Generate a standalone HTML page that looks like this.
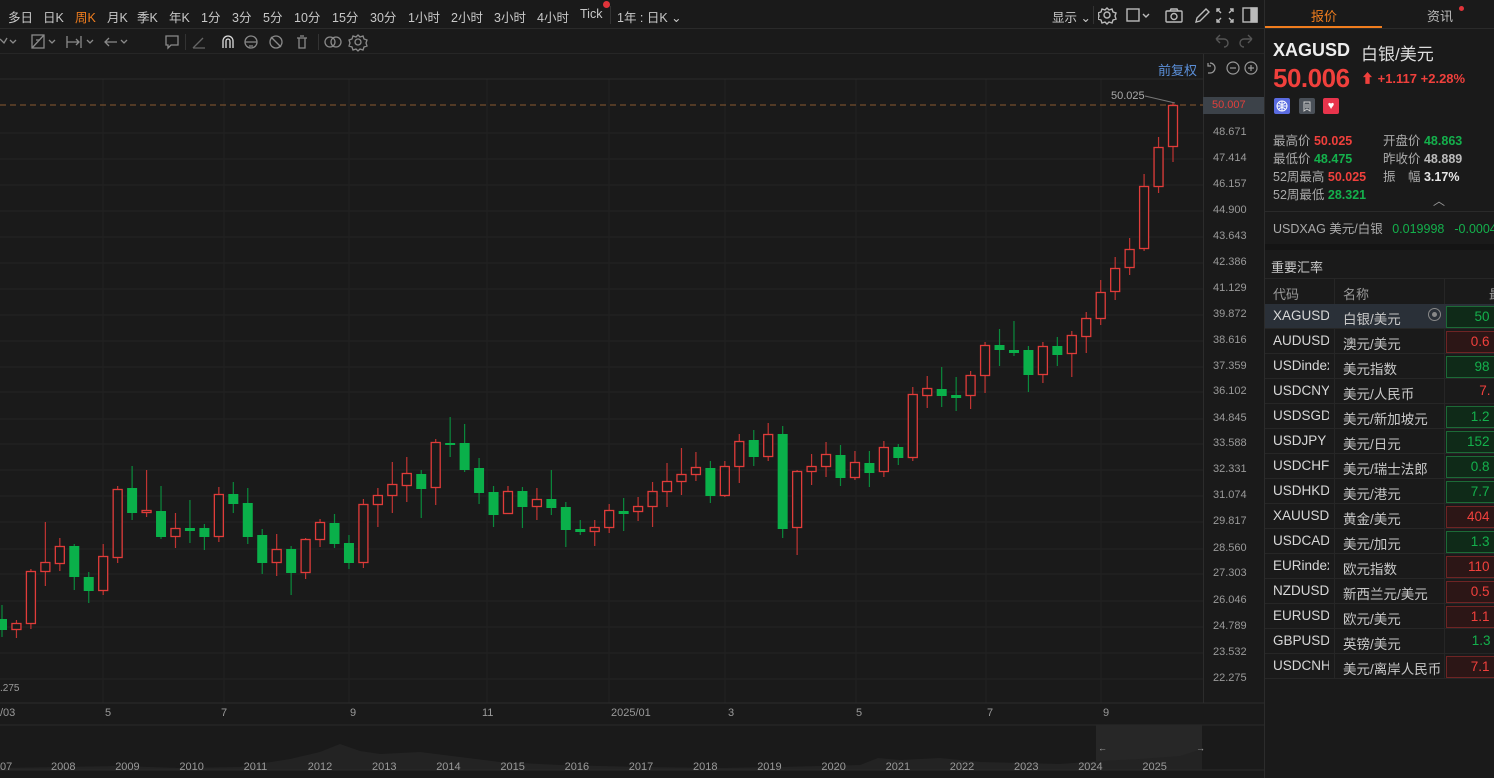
<!DOCTYPE html>
<html><head><meta charset="utf-8">
<style>
*{margin:0;padding:0;box-sizing:border-box}
body{width:1494px;height:778px;background:#1a1a1a;overflow:hidden;position:relative;font-family:"Liberation Sans","Noto Sans CJK SC",sans-serif;color:#c8c8c8;font-size:13px}
.a{position:absolute;white-space:nowrap}
.tb span{position:absolute;top:7px;font-size:12.5px;color:#c8c8c8}
.pl{position:absolute;left:1213px;font-size:11px;color:#9a9a9a}
.rp{position:absolute;left:1264px;top:0;width:230px;height:778px;background:#1a1a1a;border-left:1px solid #2c2c2c}
.st{position:absolute;font-size:12.5px;color:#aaa;white-space:nowrap}
.r{color:#f0403c}.g{color:#14b04c}.w{color:#e6e6e6}.y{color:#e3b23c}
.row{position:absolute;left:0;width:230px;height:25px;border-bottom:1px solid #262626;font-size:13.5px;white-space:nowrap}
.row .c1{position:absolute;left:8px;top:4px;width:56px;overflow:hidden;color:#d8d8d8}
.row .c2{position:absolute;left:78px;top:4px;width:97px;overflow:hidden;color:#c8c8c8}
.row .c3{position:absolute;left:181px;top:2px;width:52px;height:22px;font-size:13.5px;padding-top:2px;text-align:right}
.gb{background:#0f2a18;border:1px solid #1c6a36;color:#14b04c}
.rb{background:#2c1616;border:1px solid #6e2424;color:#f0403c}
.nb{color:#f0403c}
</style></head><body>
<div class="tb" style="position:absolute;left:0;top:0;width:1264px;height:29px;border-bottom:1px solid #2a2a2a">
<span style="left:8px">多日</span><span style="left:43px">日K</span><span style="left:75px;color:#f07d1e">周K</span><span style="left:107px">月K</span><span style="left:137px">季K</span><span style="left:169px">年K</span><span style="left:201px">1分</span><span style="left:232px">3分</span><span style="left:263px">5分</span><span style="left:294px">10分</span><span style="left:332px">15分</span><span style="left:370px">30分</span><span style="left:408px">1小时</span><span style="left:451px">2小时</span><span style="left:494px">3小时</span><span style="left:537px">4小时</span><span style="left:580px">Tick</span><span style="left:617px">1年 : 日K ⌄</span><span style="left:1052px">显示 ⌄</span>
</div>
<div class="a" style="left:603px;top:1px;width:7px;height:7px;border-radius:50%;background:#e0343a"></div>
<div class="a" style="left:610px;top:6px;width:1px;height:18px;background:#333"></div>
<div class="a" style="left:1093px;top:6px;width:1px;height:18px;background:#333"></div>
<svg class="a" style="left:1098px;top:5px" width="166" height="20" fill="none" stroke="#bbb" stroke-width="1.4">
<circle cx="9" cy="10" r="3"/><path d="M9 3l2 2 3-1 1 3 3 1-1 3 1 3-3 1-1 3-3-1-2 2-2-2-3 1-1-3-3-1 1-3-1-3 3-1 1-3 3 1z"/>
<rect x="29" y="4" width="12" height="12"/><path d="M45 9l3 3 3-3"/>
<rect x="68" y="6" width="16" height="11" rx="1"/><circle cx="76" cy="11.5" r="3"/><path d="M72 6l1-2h6l1 2"/>
<path d="M98 17l1-4 9-9 3 3-9 9z"/>
<path d="M122 4h-3v3M132 4h3v3M122 17h-3v-3M132 17h3v-3M119 4l4 4M135 4l-4 4M119 17l4-4M135 17l-4-4"/>
<rect x="145" y="3" width="14" height="14"/><rect x="153" y="3" width="6" height="14" fill="#bbb"/>
</svg>
<div class="a" style="left:0;top:29px;width:1264px;height:25px;border-bottom:1px solid #262626"></div>
<svg class="a" style="left:0;top:32px" width="380" height="20" fill="none" stroke="#8a8a8a" stroke-width="1.3">
<path d="M0 7l4 4 3-5M10 8l3 3 3-3"/>
<rect x="32" y="3" width="12" height="13"/><path d="M32 16l12-13M36 8h4"/><path d="M49 8l3 3 3-3"/>
<path d="M67 4v12M67 10h12M76 7l3 3-3 3M81 4v12"/><path d="M87 8l3 3 3-3"/>
<path d="M105 10h12M109 6l-4 4 4 4"/><path d="M121 8l3 3 3-3"/>
<path d="M166 4h12v9h-7l-3 3v-3h-2z"/>
<path d="M193 16l10-10M193 16h12" stroke="#666"/>
<path d="M223 16v-7a5 5 0 0110 0v7M226 16v-7a2 2 0 014 0v7" stroke="#ddd"/>
<circle cx="251" cy="10" r="6"/><path d="M245 10h12M249 14h4"/>
<circle cx="276" cy="10" r="6"/><path d="M271 5l10 10"/>
<path d="M297 6h10M299 6v10h6V6M300 4h4"/>
<circle cx="330" cy="10" r="5"/><circle cx="336" cy="10" r="5"/>
<circle cx="358" cy="10" r="3"/><path d="M358 3l2 2 3-1 1 3 3 1-1 3 1 3-3 1-1 3-3-1-2 2-2-2-3 1-1-3-3-1 1-3-1-3 3-1 1-3 3 1z"/>
</svg>
<div class="a" style="left:185px;top:34px;width:1px;height:16px;background:#333"></div>
<div class="a" style="left:318px;top:34px;width:1px;height:16px;background:#333"></div>
<svg class="a" style="left:1212px;top:33px" width="45" height="16" fill="none" stroke="#555" stroke-width="1.4"><path d="M4 6h8a4 4 0 010 8M4 6l4-4M4 6l4 4M40 6h-8a4 4 0 000 8M40 6l-4-4M40 6l-4 4"/></svg>
<svg id="ch" class="a" style="left:0;top:54px" width="1264" height="724"></svg>
<div class="a" style="left:1158px;top:60px;font-size:13px;color:#5b8fd8">前复权</div>
<svg class="a" style="left:1205px;top:60px" width="55" height="16" fill="none" stroke="#999" stroke-width="1.2"><path d="M5 3a5 5 0 110 10H3M3 3v3h3"/><circle cx="28" cy="8" r="6"/><path d="M25 8h6"/><circle cx="46" cy="8" r="6"/><path d="M43 8h6M46 5v6"/></svg>
<div class="a" style="left:1111px;top:90px;font-size:11px;color:#aaa">50.025</div>
<div class="a" style="left:1203px;top:97px;width:61px;height:17px;background:#3c4249;color:#e0403c;font-size:11px;padding:2px 0 0 9px">50.007</div>
<div id="pls"></div>
<div class="a" style="left:0;top:683px;font-size:10px;color:#9a9a9a">.275</div>
<div id="tls"></div>
<div class="rp">
<div class="a" style="left:0;top:0;width:117px;height:28px;border-bottom:2px solid #f07d1e"></div>
<div class="a" style="left:0;top:28px;width:230px;height:1px;background:#2a2a2a"></div>
<div class="a" style="left:46px;top:6px;color:#f07d1e;font-size:13px">报价</div>
<div class="a" style="left:162px;top:6px;color:#bbb;font-size:13px">资讯</div>
<div class="a" style="left:194px;top:6px;width:5px;height:5px;border-radius:50%;background:#e0343a"></div>
<div class="a" style="left:8px;top:40px;font-size:18px;font-weight:bold;color:#eee">XAGUSD</div>
<div class="a" style="left:96px;top:40px;font-size:17px;color:#ddd">白银/美元</div>
<div class="a" style="left:8px;top:63px;font-size:26px;font-weight:bold;color:#f0403c;letter-spacing:-0.5px">50.006</div>
<div class="a" style="left:96px;top:68px;font-size:13px;font-weight:bold;color:#f0403c">⬆ +1.117 +2.28%</div>
<div class="a" style="left:9px;top:98px;width:16px;height:16px;background:#5a6be0;border-radius:2px"></div>
<svg class="a" style="left:9px;top:98px" width="16" height="16" fill="none" stroke="#fff" stroke-width="1"><circle cx="8" cy="8" r="5"/><path d="M3 8h10M8 3v10M5 5q3 3 6 0M5 11q3-3 6 0"/></svg>
<div class="a" style="left:34px;top:98px;width:16px;height:16px;background:#4a5058;border-radius:2px"></div>
<svg class="a" style="left:34px;top:98px" width="16" height="16" fill="none" stroke="#ccc" stroke-width="1"><path d="M5 4h6v9l-3-2-3 2z M6 7h4M6 9h4"/></svg>
<div class="a" style="left:58px;top:98px;width:16px;height:16px;background:#e8344c;border-radius:2px;color:#fff;font-size:11px;text-align:center;line-height:16px">♥</div>
<div class="st" style="left:8px;top:130px">最高价 <b class="r">50.025</b></div>
<div class="st" style="left:8px;top:148px">最低价 <b class="g">48.475</b></div>
<div class="st" style="left:8px;top:166px">52周最高 <b class="r">50.025</b></div>
<div class="st" style="left:8px;top:184px">52周最低 <b class="g">28.321</b></div>
<div class="st" style="left:118px;top:130px">开盘价 <b class="g">48.863</b></div>
<div class="st" style="left:118px;top:148px">昨收价 <b style="color:#bbb">48.889</b></div>
<div class="st" style="left:118px;top:166px">振　幅 <b class="w">3.17%</b></div>
<div class="a" style="left:168px;top:192px;color:#999;font-size:12px">︿</div>
<div class="a" style="left:0;top:211px;width:230px;height:1px;background:#2a2a2a"></div>
<div class="a" style="left:8px;top:218px;font-size:12.5px;color:#aaa">USDXAG 美元/白银 <span class="g" style="margin-left:6px">0.019998</span><span class="g" style="margin-left:10px">-0.00045</span></div>
<div class="a" style="left:0;top:244px;width:230px;height:6px;background:#141414"></div>
<div class="a" style="left:6px;top:257px;font-size:13px;color:#ccc">重要汇率</div>
<div class="a" style="left:0;top:278px;width:230px;height:1px;background:#262626"></div>
<div class="a" style="left:69px;top:279px;width:1px;height:400px;background:#262626"></div>
<div class="a" style="left:179px;top:279px;width:1px;height:400px;background:#262626"></div>
<div class="a" style="left:8px;top:284px;color:#999;font-size:13px">代码</div>
<div class="a" style="left:78px;top:284px;color:#999;font-size:13px">名称</div>
<div class="a" style="left:224px;top:284px;color:#999;font-size:13px">最</div>
<div id="rows"></div>
</div>
<script>
var ch=document.getElementById('ch'),s='';
var T=54;
var py=[133,159,185,211,237,263,289,315,341,367,392,419,444,470,496,522,549,574,601,627,653,679];
py.forEach(function(y){s+='<line x1="0" x2="1203" y1="'+(y-T)+'" y2="'+(y-T)+'" stroke="#242424"/>';});
[103,224,349,487,609,725,856,986,1101].forEach(function(x){s+='<line x1="'+x+'" x2="'+x+'" y1="25" y2="649" stroke="#222"/>';});
s+='<line x1="0" x2="1203" y1="25" y2="25" stroke="#2a2a2a"/>';
s+='<line x1="1203.5" x2="1203.5" y1="0" y2="649" stroke="#2c2c2c"/>';
s+='<line x1="0" x2="1264" y1="649" y2="649" stroke="#2c2c2c"/>';
s+='<line x1="0" x2="1264" y1="671" y2="671" stroke="#2a2a2a"/>';
s+='<line x1="0" x2="1203" y1="51" y2="51" stroke="#8a5a30" stroke-dasharray="6,4"/>';
s+='<line x1="1145" x2="1175" y1="42" y2="49" stroke="#777"/>';
var nav='M0 716 ';var pts=[[0,714],[60,713],[120,712],[180,714],[240,713],[290,705],[320,698],[340,690],[360,697],[380,700],[420,698],[460,703],[500,708],[560,711],[640,713],[720,714],[780,713],[820,712],[860,711],[878,704],[900,706],[940,704],[980,708],[1020,709],[1060,710],[1100,707],[1140,705],[1180,702],[1202,695],[1202,716]];
pts.forEach(function(p){nav+='L'+p[0]+' '+p[1]+' ';});
s+='<rect x="1096" y="671" width="106" height="45" fill="#272727"/>';
s+='<path d="'+nav+'Z" fill="#232323"/>';
s+='<text x="1098" y="697" fill="#aaa" font-size="9">←</text><text x="1196" y="697" fill="#aaa" font-size="9">→</text>';
s+='<line x1="0" x2="1264" y1="716" y2="716" stroke="#2a2a2a"/>';
var D=[
['g',619,630,605,637],['r',623,630,620,638],['r',571,624,569,629],['r',562,572,522,586],['r',546,564,538,571],['g',546,577,544,590],['g',577,591,572,603],['r',556,591,544,595],['r',489,558,486,563],['g',488,513,466,520],['r',510,513,470,517],['g',511,537,486,539],['r',528,537,513,548],['g',528,531,500,543],['g',528,537,524,550],['r',494,537,487,542],['g',494,504,482,513],['g',503,537,488,544],['g',535,563,529,574],['r',549,563,534,576],['g',549,573,546,595],['r',539,573,538,579],['r',522,540,519,547],['g',523,544,514,548],['g',543,563,535,569],['r',504,563,499,568],['r',495,505,488,527],['r',484,496,462,513],['r',473,486,457,502],['g',474,489,470,518],['r',442,488,439,505],['g',443,445,417,457],['g',443,470,424,472],['g',468,493,458,504],['g',492,515,486,527],['r',491,514,486,514],['g',491,507,487,528],['r',499,507,488,520],['g',499,508,470,515],['g',507,530,502,547],['g',529,532,520,535],['r',527,532,520,546],
['r',510,528,504,533],['g',511,514,498,531],['r',506,512,497,521],['r',491,507,482,527],['r',481,492,463,507],['r',474,482,448,495],['r',467,475,452,481],['g',468,496,461,503],['r',466,496,461,497],['r',441,467,434,483],['g',440,457,430,466],['r',434,457,423,461],['g',434,529,426,538],['r',471,528,470,555],['r',466,472,454,485],['r',454,467,442,477],['g',455,478,445,486],['r',462,478,451,480],['g',463,473,451,487],['r',447,472,441,477],['g',447,458,444,465],['r',394,458,387,461],['r',388,396,376,408],['g',389,396,367,407],['g',395,398,377,411],['r',375,396,371,409],['r',345,376,342,393],['g',345,350,329,366],['g',350,353,321,356],['g',350,375,346,392],['r',346,375,342,383],['g',346,355,337,366],['r',335,354,331,377],['r',318,337,312,353],['r',292,319,280,325],['r',268,292,257,300],['r',249,268,238,275],['r',186,249,174,251],['r',147,187,137,193],['r',105,147,103,162]];
var n=D.length,x0=2,x1=1173;
D.forEach(function(d,i){var x=x0+(x1-x0)*i/(n-1);var c=d[0]=='g'?'#0ab04a':'#e03c3a';var wc=d[0]=='g'?'#0a8a3c':'#c03432';
s+='<line x1="'+x+'" x2="'+x+'" y1="'+(d[3]-T)+'" y2="'+(d[4]-T)+'" stroke="'+wc+'" stroke-width="1.2"/>';
var h=Math.max(d[2]-d[1],2);
if(d[0]=='g')s+='<rect x="'+(x-5)+'" y="'+(d[1]-T)+'" width="10" height="'+h+'" fill="'+c+'"/>';
else s+='<rect x="'+(x-4.5)+'" y="'+(d[1]-T+0.5)+'" width="9" height="'+(h-1)+'" fill="#1a1a1a" stroke="'+c+'" stroke-width="1.3"/>';});
ch.innerHTML=s;
var labs=['48.671','47.414','46.157','44.900','43.643','42.386','41.129','39.872','38.616','37.359','36.102','34.845','33.588','32.331','31.074','29.817','28.560','27.303','26.046','24.789','23.532','22.275'];
var h='';labs.forEach(function(l,i){h+='<div class="pl" style="top:'+(py[i]-7)+'px">'+l+'</div>';});
document.getElementById('pls').innerHTML=h;
h='';[['/03',0],['5',105],['7',221],['9',350],['11',482],['2025/01',611],['3',728],['5',856],['7',987],['9',1103]].forEach(function(t){h+='<div class="a" style="left:'+t[1]+'px;top:707px;font-size:11px;color:#9a9a9a">'+t[0]+'</div>';});
h+='<div class="a" style="left:0;top:761px;font-size:11px;color:#9a9a9a">07</div>';
for(var y=2008;y<=2025;y++){h+='<div class="a" style="left:'+(51+(y-2008)*64.2)+'px;top:761px;font-size:11px;color:#9a9a9a">'+y+'</div>';}
document.getElementById('tls').innerHTML=h;
var R=[['XAGUSD','白银/美元','50','g',1],['AUDUSD','澳元/美元','0.6','r'],['USDindex','美元指数','98','g',1],['USDCNY','美元/人民币','7.','n'],['USDSGD','美元/新加坡元','1.2','g'],['USDJPY','美元/日元','152','g'],['USDCHF','美元/瑞士法郎','0.8','g'],['USDHKD','美元/港元','7.7','g'],['XAUUSD','黄金/美元','404','r',1],['USDCAD','美元/加元','1.3','g'],['EURindex','欧元指数','110','r'],['NZDUSD','新西兰元/美元','0.5','r'],['EURUSD','欧元/美元','1.1','r'],['GBPUSD','英镑/美元','1.3','x'],['USDCNH','美元/离岸人民币','7.1','r',1]];
h='';R.forEach(function(r,i){var cls=r[3]=='g'?'gb':r[3]=='r'?'rb':r[3]=='n'?'nb':'g';
h+='<div class="row" style="top:'+(304+i*25)+'px;'+(i==0?'background:#2a3038;':'')+'"><div class="c1">'+r[0]+'</div><div class="c2'+(r[4]?' y':'')+'">'+r[1]+'</div><div class="c3 '+cls+'">'+r[2]+'&nbsp;&nbsp;</div>'+(i==0?'<div class="a" style="left:163px;top:4px;width:13px;height:13px;border:1px solid #888;border-radius:50%"><div style="margin:3px;width:5px;height:5px;border-radius:50%;background:#888"></div></div>':'')+'</div>';});
document.getElementById('rows').innerHTML=h;
</script>
</body></html>
